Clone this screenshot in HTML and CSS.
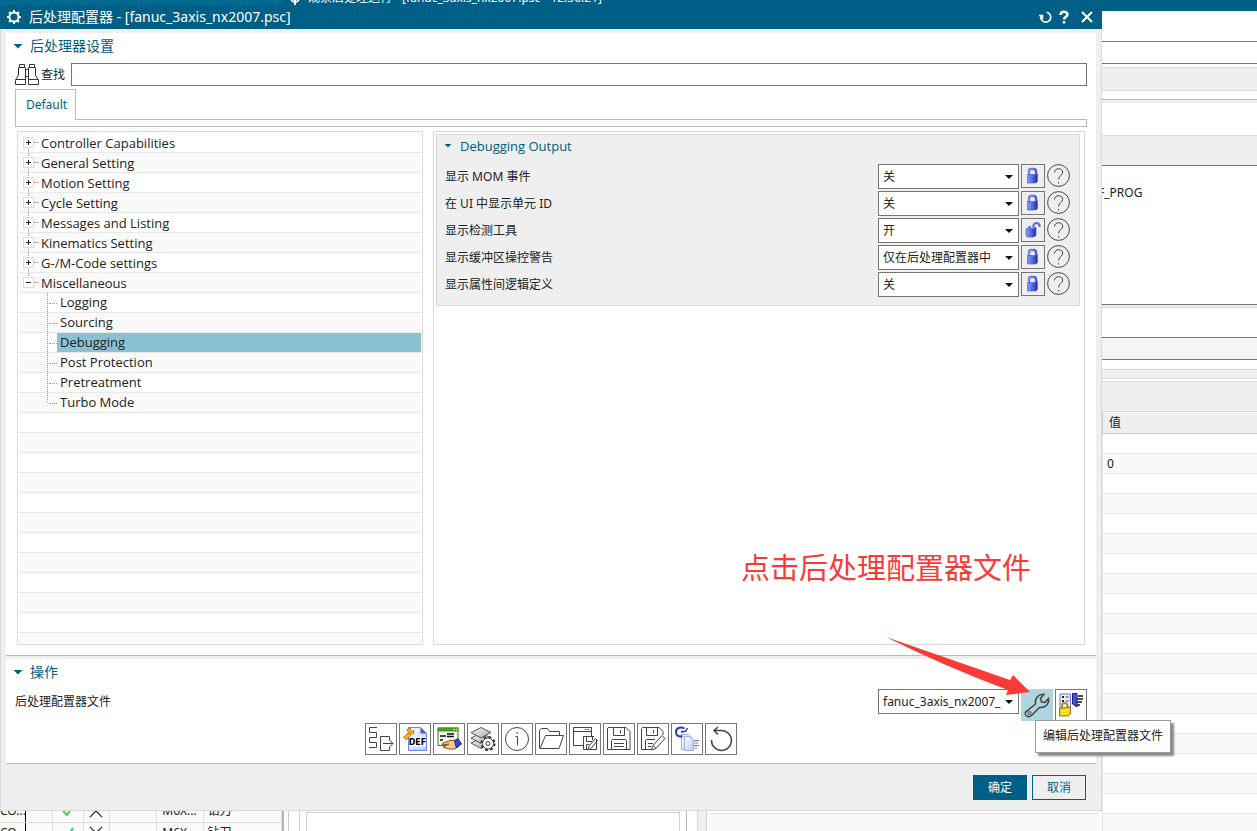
FILE: index.html
```html
<!DOCTYPE html>
<html lang="zh-CN">
<head>
<meta charset="utf-8">
<title>后处理配置器</title>
<link rel="stylesheet" href="styles.css">
</head>
<body>
<svg class="defs" aria-hidden="true">
  <defs>
    <linearGradient id="blue" x1="0" x2="1" y1="0" y2="0">
      <stop offset="0" stop-color="#8d9cf4"/><stop offset=".5" stop-color="#5468e0"/><stop offset="1" stop-color="#1c2f9c"/>
    </linearGradient>
    <linearGradient id="paper" x1="0" x2="1" y1="0" y2="1">
      <stop offset="0" stop-color="#ffffff"/><stop offset="1" stop-color="#b9c8ff"/>
    </linearGradient>
    <linearGradient id="sheet" x1="0" x2="1" y1="0" y2="1">
      <stop offset="0" stop-color="#ffffff"/><stop offset="1" stop-color="#a0a0a0"/>
    </linearGradient>
  </defs>
  <symbol id="lock" viewBox="0 0 22 22">
    <path d="M7 10V6.500Q7 4 9.500 4H11.500Q14 4 14 6.500V10" fill="none" stroke="#4c60d4" stroke-width="2.400"/>
    <path d="M6.800 9V6.500Q7 4.200 9.500 4.200H11.500" fill="none" stroke="#a9b4f8" stroke-width="1"/>
    <path d="M5.500 9.500H14L15.500 8.500V16.500L14 18H5.500Z" fill="url(#blue)" stroke="#4a5fd6" stroke-width=".7"/>
  </symbol>
  <symbol id="unlock" viewBox="0 0 22 22">
    <path d="M11.500 9V6.500Q12 4 14.500 4T17.500 6.500V8" fill="none" stroke="#5a6fe0" stroke-width="2.200"/>
    <path d="M4 9.500H12L14 8V16.500L12 18H5L4 16Z" fill="url(#blue)" stroke="#4a5fd6" stroke-width=".7"/>
    <path d="M6 8H9" stroke="#6a7ce8" stroke-width="2"/>
  </symbol>
  <symbol id="help" viewBox="0 0 23 23">
    <circle cx="11.500" cy="11.500" r="10.900"/>
    <path d="M7.500 8.500C7.500 3.500 15.700 3.500 15.700 8.200C15.700 11.500 11.600 11.500 11.600 15.500M11.600 18V19.500"/>
  </symbol>
</svg>

<div class="app">
  <header class="app-bar">
    <div class="app-tab"></div>
    <div class="app-title"><svg class="app-gear" viewBox="0 0 14 14"><circle cx="7" cy="7" r="4"/><path d="M7 0V14M0 7H14"/></svg><span>观察后处理运行 - [fanuc_3axis_nx2007.psc - 12:56:21]</span></div>
  </header>
  <div class="workspace">
    <div class="lower">
      <div class="ops">
        <table class="ops-table">
          <tr><td class="c-name">CO...</td><td class="c-a"></td><td class="c-tick"><svg viewBox="0 0 14 12"><path class="tick" d="M2 6L6 10L12 1"/></svg></td><td class="c-x"><svg viewBox="0 0 16 16"><path class="cross" d="M1 1L8 8L15 1M1 15L8 8L15 15"/></svg></td><td class="c-b"></td><td class="c-tool">M6X...</td><td class="c-type">钻刀</td></tr>
          <tr><td class="c-name">CO...</td><td class="c-a"></td><td class="c-tick"><svg viewBox="0 0 14 12"><path class="tick" d="M2 6L6 10L12 1"/></svg></td><td class="c-x"><svg viewBox="0 0 16 16"><path class="cross" d="M1 1L8 8L15 1M1 15L8 8L15 15"/></svg></td><td class="c-b"></td><td class="c-tool">M6X...</td><td class="c-type">钻刀</td></tr>
        </table>
      </div>
      <div class="lower-mid"><div class="lower-inner"><div class="lower-box"></div></div></div>
      <div class="lower-split"></div>
      <div class="lower-list"></div>
    </div>
    <aside class="side">
      <div class="side-field"></div>
      <div class="side-strip"></div>
      <div class="side-gap"></div>
      <div class="side-bar"></div>
      <div class="side-text">F_PROG</div>
      <div class="side-blank"></div>
      <div class="side-field shaded"></div>
      <div class="side-thin"></div>
      <div class="side-bar tall"></div>
      <div class="side-head">值</div>
      <div class="side-rows"><div></div><div>0</div></div>
    </aside>
  </div>
</div>

<main class="dialog">
  <header class="title-bar">
    <svg class="gear" viewBox="0 0 16 16"><circle cx="8" cy="8" r="4.600"/><path d="M8 1V3.500M8 12.500V15M1 8H3.500M12.500 8H15M3 3L4.800 4.800M11.200 11.200L13 13M3 13L4.800 11.200M11.200 4.800L13 3"/></svg>
    <h1>后处理配置器 - [fanuc_3axis_nx2007.psc]</h1>
    <button class="win" aria-label="重置"><svg viewBox="0 0 14 14"><path d="M8.500 2.200A5 5 0 1 1 3 5.500M1 5.500H4.500V9" fill="none" stroke="#fff" stroke-width="1.600"/></svg></button>
    <button class="win" aria-label="帮助"><svg viewBox="0 0 14 14"><path d="M3.500 5C3.500 .8 10.500 .8 10.500 4.500C10.500 7 7 6.800 7 9.500M7 11V13.500" fill="none" stroke="#fff" stroke-width="2.500"/></svg></button>
    <button class="win last" aria-label="关闭"><svg viewBox="0 0 14 14"><path d="M2 2L12 12M12 2L2 12" fill="none" stroke="#fff" stroke-width="2"/></svg></button>
  </header>

  <section class="panel settings">
    <h2>后处理器设置</h2>
    <div class="search">
      <svg class="binoc" viewBox="0 0 24 23"><path d="M.5 21.500V17.500L3.500 12V4.500H4.500V1.500H9.500V4.500H10.500V21.500ZM23.500 21.500V17.500L20.500 12V4.500H19.500V1.500H14.500V4.500H13.500V21.500ZM.5 16.500H10.500M13.500 16.500H23.500M4.500 4.500H9.500M14.500 4.500H19.500M10.500 6.500H13.500M10.500 13.500H13.500"/></svg>
      <label for="find">查找</label>
      <input id="find" type="text">
    </div>
    <div class="tabs">
      <button class="tab">Default</button>
      <div class="tab-line"></div>
    </div>
    <div class="split">
      <ul class="tree">
        <li><i class="box plus"></i>Controller Capabilities</li>
        <li><i class="box plus"></i>General Setting</li>
        <li><i class="box plus"></i>Motion Setting</li>
        <li><i class="box plus"></i>Cycle Setting</li>
        <li><i class="box plus"></i>Messages and Listing</li>
        <li><i class="box plus"></i>Kinematics Setting</li>
        <li><i class="box plus"></i>G-/M-Code settings</li>
        <li class="open"><i class="box"></i>Miscellaneous</li>
        <li class="leaf"><span>Logging</span></li>
        <li class="leaf"><span>Sourcing</span></li>
        <li class="leaf selected"><span>Debugging</span></li>
        <li class="leaf"><span>Post Protection</span></li>
        <li class="leaf"><span>Pretreatment</span></li>
        <li class="leaf end"><span>Turbo Mode</span></li>
      </ul>
      <div class="detail">
        <div class="group">
          <h3>Debugging Output</h3>
          <div class="prop"><label for="p1">显示 MOM 事件</label><div class="combo"><select id="p1"><option>关</option></select></div><button class="lock" aria-label="锁定"><svg><use href="#lock"/></svg></button><button class="help" aria-label="帮助"><svg><use href="#help"/></svg></button></div>
          <div class="prop"><label for="p2">在 UI 中显示单元 ID</label><div class="combo"><select id="p2"><option>关</option></select></div><button class="lock" aria-label="锁定"><svg><use href="#lock"/></svg></button><button class="help" aria-label="帮助"><svg><use href="#help"/></svg></button></div>
          <div class="prop"><label for="p3">显示检测工具</label><div class="combo"><select id="p3"><option>开</option></select></div><button class="lock" aria-label="解锁"><svg><use href="#unlock"/></svg></button><button class="help" aria-label="帮助"><svg><use href="#help"/></svg></button></div>
          <div class="prop"><label for="p4">显示缓冲区操控警告</label><div class="combo"><select id="p4"><option>仅在后处理配置器中</option></select></div><button class="lock" aria-label="锁定"><svg><use href="#lock"/></svg></button><button class="help" aria-label="帮助"><svg><use href="#help"/></svg></button></div>
          <div class="prop"><label for="p5">显示属性间逻辑定义</label><div class="combo"><select id="p5"><option>关</option></select></div><button class="lock" aria-label="锁定"><svg><use href="#lock"/></svg></button><button class="help" aria-label="帮助"><svg><use href="#help"/></svg></button></div>
        </div>
      </div>
    </div>
  </section>

  <section class="panel actions">
    <h2>操作</h2>
    <div class="file-row">
      <label for="file">后处理配置器文件</label>
      <div class="combo"><select id="file"><option>fanuc_3axis_nx2007_</option></select></div>
      <div class="edit-wrap">
        <button class="icon edit" aria-label="编辑"><svg viewBox="1 1 30 30"><path class="ln heavy" d="M4.800 22.800L14.500 15C13.500 9 17.500 5 23 5.200L19.500 9.500L20.500 13L24 13.500L27.500 9.500C28.500 15 24.500 19 18.500 18.500L10.500 26.500C7.500 29.500 2.500 26 4.800 22.800Z"/><circle class="ln" cx="8.500" cy="24" r="1.500"/></svg></button>
        <div class="tooltip">编辑后处理配置器文件</div>
      </div>
      <button class="icon" aria-label="保护"><svg viewBox="1 1 30 30"><path d="M5 5H15.500V22H5Z" fill="#eef0ff" stroke="#6d73cf"/><path d="M7 8H9M7 12H9" stroke="#222" stroke-width="2"/><path d="M10.500 8H14M10.500 12H14" stroke="#3949bb"/><path d="M17.500 4.500H22V18L17.500 15Z" fill="#4156da" stroke="#17206c"/><path d="M23 7H28M22 10H28M22 13H27M22 16H25" stroke="#111" stroke-width="1.500"/><path d="M7 19V16.500Q7 14 9.500 14T12.500 16.500V18" fill="none" stroke="#b89200" stroke-width="2"/><path d="M4.500 19.500L15.500 18V25L13 27H4.500Z" fill="#f3d21f" stroke="#957700"/><path d="M6 22H13M6 24.500H13" stroke="#fff27e"/></svg></button>
    </div>
    <div class="tools">
      <button class="icon" aria-label="导出"><svg viewBox="1 1 30 30"><path class="ln" d="M12 4.500H4.500V9.500H11.500V14.500H4.500V19.500H11.500V24.500H4M24.500 17V13.500H15.500V27.500H24.500V24M18 20.500H28M24.500 17L28 20.500L24.500 24"/></svg></button>
      <button class="icon" aria-label="定义"><svg viewBox="1 1 30 30"><path d="M9.500 4.500H21.500L27.500 10.500V27.500H9.500Z" fill="url(#paper)" stroke="#6d83e6"/><path d="M21.500 4.500V10.500H27.500Z" fill="#3b5be0"/><path d="M5.500 16L11 10.500" stroke="#b56b00" stroke-width="4"/><path d="M5.500 16L11 10.500" stroke="#ffb62c" stroke-width="2.500"/><path d="M8 6.500L10 11L14.500 11L15 7L12.500 8.500L11 7.500L12 4.500Z" fill="#ffb62c" stroke="#b56b00" stroke-width=".8"/><rect x="10.500" y="14" width="16" height="9.500" fill="#fff"/><text x="18.500" y="22" text-anchor="middle" class="def">DEF</text></svg></button>
      <button class="icon" aria-label="检查"><svg viewBox="1 1 30 30"><path d="M5 5H25V22.500H5Z" fill="#f4f8ef" stroke="#3e7d20"/><path d="M4.500 4.500H25.500V8.500H4.500Z" fill="#4d9a27"/><path d="M20 6.500H22M23 6.500H24.500" stroke="#fff"/><path d="M7 13H13M14 11H21M14 13.500H21M7 17H10" stroke="#111" stroke-width="1.500"/><path d="M10 20L17 17.500L23 17L25.500 22L22 26H15L12 24.500L10 24L16 21L9 22Z" fill="#f8c983" stroke="#80531b"/><path d="M21.500 18L25 15.500L28.500 21L23.500 25Z" fill="#314fc8" stroke="#142a83"/></svg></button>
      <button class="icon" aria-label="图层设置"><svg viewBox="1 1 30 30"><path d="M4 20L14 25.500L24 20L14 15Z" fill="url(#sheet)" stroke="#555"/><path d="M4 15L14 20.500L24 15L14 10Z" fill="url(#sheet)" stroke="#555"/><path d="M4 9.500L14 15L24 9.500L14 4.500Z" fill="url(#sheet)" stroke="#555"/><circle cx="21" cy="20.500" r="6.500" fill="#fff" stroke="#333" stroke-width="2.200" stroke-dasharray="2.600 2.500"/><circle cx="21" cy="20.500" r="5.500" fill="#fff" stroke="#333"/><circle cx="21" cy="20.500" r="2" fill="#fff" stroke="#333"/></svg></button>
      <button class="icon" aria-label="信息"><svg viewBox="1 1 30 30"><circle class="ln" cx="16" cy="16" r="11.500"/><path class="ln" d="M14.500 13.500H16.500V22.500M16.200 9V11"/></svg></button>
      <button class="icon" aria-label="打开"><svg viewBox="1 1 30 30"><path class="ln" d="M5 25.500L4.500 24.500V7.500L6.500 5.500H12.500L14.500 8.500H24.500V12.500M5 25.500L10.500 12.500H28.500L24 25.500Z"/></svg></button>
      <button class="icon" aria-label="窗口另存"><svg viewBox="1 1 30 30"><path class="ln" d="M14 22.500H4.500V4.500H22.500V13M4.500 8.500H22.500M16 6.500H17.500M18.500 6.500H20M27.500 17V26.500H14.500V13.500H25M17.500 13.500V18.500H23M17.500 26.500V21.500H20M23.500 14V17"/><path class="ln" d="M19 27L20 23L26.500 15.500L28.500 17.500L22.500 25Z"/></svg></button>
      <button class="icon" aria-label="保存"><svg viewBox="1 1 30 30"><path class="ln" d="M4.500 5.500L5.500 4.500H23L27 8.500V26.500H4.500ZM10.500 4.500V12.500H21.500V4.500M17.500 7V10M8.500 26.500V17.500L9.500 16.500H22.500L23.500 17.500V26.500M11 20.500H21M11 23.500H21"/></svg></button>
      <button class="icon" aria-label="另存为"><svg viewBox="1 1 30 30"><path class="ln" d="M15 26.500H4.500V5.500L5.500 4.500H22L26 8.500V12M9.500 4.500V12.500H20.500V4.500M16.500 7V10M8.500 26.500V17.500L9.500 16.500H18M11 20.500H16M11 23.500H14M14.500 27L16 22.500L25 12.500L28 15.500L19 25.500ZM16 22.500L19 25.500"/></svg></button>
      <button class="icon" aria-label="重新生成"><svg viewBox="1 1 30 30"><path d="M10.500 11.500H17.500L20.500 14.500V26.500H10.500Z" fill="url(#paper)" stroke="#a3b0e8"/><path d="M13.500 13.500H18.500L22.500 17V27.500H13.500Z" fill="url(#paper)" stroke="#a3b0e8"/><path d="M22.500 17.500H28M23.500 20H27M22.500 22.500H28M23.500 25H26" stroke="#5d76d0"/><path d="M13.500 5.500C9 3 5 5.500 5 9C5 12.500 8 14.500 11.500 13" fill="none" stroke="#2f429c" stroke-width="2"/><path d="M11 10V8.500H14.500L16.500 5" fill="none" stroke="#2f429c" stroke-width="1.500"/></svg></button>
      <button class="icon" aria-label="撤消"><svg viewBox="1 1 30 30"><path class="ln heavy" d="M6.500 17A10 10 0 1 0 16 7.500H9M13 4L9 7.500L13 11.500"/></svg></button>
    </div>
  </section>

  <footer class="foot">
    <button class="btn primary">确定</button>
    <button class="btn">取消</button>
  </footer>

  <div class="note">点击后处理配置器文件</div>
  <svg class="arrow" viewBox="0 0 144 60"><path d="M0 0L124 43L127 38L144 55L120 58L122 53Q60 30 0 0Z"/></svg>
</main>
</body>
</html>
```

FILE: styles.css
```css
* { box-sizing: border-box; }

body {
  margin: 0;
  position: relative;
  height: 100vh;
  overflow: hidden;
  background: #fff;
  color: #222;
  font: 12px/20px "Noto Sans", "Noto Sans CJK SC", sans-serif;
}

button, input, select { font: inherit; color: inherit; margin: 0; padding: 0; }
h1, h2, h3, ul { margin: 0; padding: 0; font-weight: normal; }
.defs { position: absolute; width: 0; height: 0; }

/* main application behind the dialog */
.app { display: flex; flex-direction: column; height: 100%; }
.app-bar { display: flex; flex: none; height: 11px; background: #005f87; color: #fff; }
.app-tab { width: 282px; height: 5px; background: #006a8e; }
.app-title { display: flex; align-items: center; gap: 6px; height: 20px; margin: -12px 0 0 6px; }
.app-gear { width: 14px; height: 14px; fill: none; stroke: #fff; stroke-width: 2; }
.workspace { flex: 1; min-height: 0; display: grid; grid-template-columns: 1fr 159px; }
.lower { align-self: end; display: flex; height: 30px; overflow: hidden; }
.ops { flex: none; width: 284px; border-right: 2px solid #b4b4b4; overflow: hidden; }
.ops-table { border-collapse: collapse; table-layout: fixed; width: 282px; background: #fafafa; }
.ops-table td { height: 21px; padding: 0; border-right: 1px solid #dedede; border-bottom: 1px solid #dedede; line-height: 20px; text-align: center; white-space: nowrap; overflow: hidden; }
.ops-table svg { display: block; margin: auto; width: 14px; height: 14px; }
.ops-table .c-name { width: 25px; padding-right: 4px; border-right: 1px solid #000; direction: rtl; unicode-bidi: plaintext; text-align: right; }
.ops-table .c-a { width: 27px; }
.ops-table .c-tick { width: 31px; }
.ops-table .c-x { width: 26px; }
.ops-table .c-b { width: 47px; }
.ops-table .c-tool { width: 47px; }
.ops-table .c-type { text-align: left; padding-left: 4px; }
.tick { fill: none; stroke: #3bd44b; stroke-width: 2; }
.cross { fill: none; stroke: #333; stroke-width: 1.5; }
.lower-mid { flex: 394; margin-left: 4px; padding-left: 10px; border-left: 1px solid #ccc; border-right: 1px solid #bbb; }
.lower-inner { height: 100%; padding: 11px 6px 0; border-left: 1px solid #ccc; }
.lower-box { height: 100%; border: 1px solid #d0d0d0; border-bottom: 0; }
.lower-split { flex: none; width: 10px; margin: 0 2px 0 10px; border-left: 1px solid #d9d9d9; border-right: 1px solid #d0d0d0; background: #efefef; }
.lower-list { flex: 396; margin-top: 12px; border-top: 1px solid #e5e5e5; background: #f9f9f9; }

.side { display: flex; flex-direction: column; min-height: 0; overflow: hidden; }
.side > div { flex: none; }
.side-field { height: 23px; margin-top: 30px; border: solid #767676; border-width: 1px 0; }
.side-field.shaded { margin-top: 29px; background: #f5f5f5; }
.side-strip { height: 24px; margin-top: 3px; background: #efefef; border: solid #d9d9d9; border-width: 1px 0; }
.side-gap { height: 4px; margin-top: 8px; background: #efefef; border-top: 1px solid #bbb; }
.side-bar { height: 30px; margin-top: 32px; background: #efefef; border-top: 1px solid #d9d9d9; }
.side-bar.tall { height: 31px; margin-top: 2px; border-bottom: 1px solid #d9d9d9; }
.side-text { height: 140px; padding-top: 17px; border: solid #767676; border-width: 1px 0; }
.side-blank { height: 3px; background: #efefef; border-bottom: 1px solid #d9d9d9; }
.side-thin { height: 10px; margin-top: 9px; background: #efefef; border: solid #d9d9d9; border-width: 1px 0; }
.side-head { height: 21px; margin-top: 1px; margin-left: 4px; padding-left: 6px; background: #efefef; border: solid #ccc; border-width: 0 0 1px 1px; line-height: 20px; }
.side > .side-rows { flex: 1 0 0; margin-left: 4px; border-left: 1px solid #e5e5e5; background: repeating-linear-gradient(#fff 0 19px, #e5e5e5 19px 20px, #f9f9f9 20px 39px, #e5e5e5 39px 40px); }
.side-rows div { height: 20px; padding-left: 4px; line-height: 19px; }

/* dialog */
.dialog {
  position: absolute;
  top: 5px;
  bottom: 20px;
  left: 0;
  width: calc(100% - 155px);
  display: flex;
  flex-direction: column;
  background: #efefef;
  border: solid #d9d9d9;
  border-width: 0 1px 1px;
}
.title-bar { display: flex; align-items: center; height: 24px; margin: 0 -1px 4px; padding: 0 8px 0 6px; background: #005f87; color: #fff; }
.title-bar h1 { flex: 1; font-size: 14px; line-height: 24px; }
.gear { width: 16px; height: 16px; margin-right: 7px; fill: none; stroke: #fff; stroke-width: 2; }
.win { width: 14px; height: 14px; margin-left: 5px; border: 0; background: none; }
.win.last { margin-left: 9px; }
.win svg { display: block; width: 14px; height: 14px; }

.panel { margin: 0 5px; background: #fff; border-bottom: 1px solid #bbb; }
.panel h2, .group h3 { display: flex; align-items: center; color: #00607f; }
.panel h2 { padding-left: 7px; gap: 7px; height: 26px; font-size: 14px; }
.panel h2::before, .group h3::before { content: ""; width: 10px; height: 5px; background: #00607f; clip-path: polygon(0 0, 100% 0, 50% 100%); }
.settings { flex: 1; min-height: 0; display: flex; flex-direction: column; padding: 0 9px 10px; }
.settings h2 { margin-left: -9px; }
.settings h2, .search, .tabs { flex: none; }
.search { display: flex; align-items: center; margin-top: 4px; height: 23px; }
.binoc { width: 24px; height: 23px; margin-right: 2px; fill: none; stroke: #333; }
.search input { flex: 1; height: 23px; margin-left: 6px; border: 1px solid #767676; background: #fff; }
.tabs { display: flex; height: 38px; margin-top: 3px; border-left: 1px solid #bbb; border-bottom: 1px solid #bbb; }
.tab { width: 60px; height: 31px; padding-left: 2px; border: solid #bbb; border-width: 1px 1px 0 0; background: #fff; color: #00607f; }
.tab-line { flex: 1; align-self: end; height: 7px; border: solid #bbb; border-width: 1px 1px 0 0; }
.split { flex: 1; min-height: 0; display: grid; grid-template-columns: 406fr 652fr; gap: 10px; margin: 4px 2px 0; }

.tree {
  list-style: none;
  padding: 1px;
  border: 1px solid #d9d9d9;
  overflow: hidden;
  font-family: "Open Sans", "Noto Sans CJK SC", sans-serif;
  font-size: 13px;
  background: repeating-linear-gradient(#fff 0 19px, #e8e8e8 19px 20px, #f9f9f9 20px 39px, #e8e8e8 39px 40px) content-box;
}
.tree li { display: flex; align-items: center; height: 20px; padding-left: 5px; line-height: 18px; padding-bottom: 1px; background: repeating-linear-gradient(#999 0 1px, transparent 1px 2px) 9px 0 / 1px 20px no-repeat; }
.tree li:first-child { background-position: 9px 10px; }
.tree li.open { background-size: 1px 10px; }
.box { position: relative; flex: none; width: 9px; height: 9px; margin-right: 8px; background: linear-gradient(#222, #222) center / 5px 1px no-repeat #fff; box-shadow: 0 0 0 1px #ddd; }
.box.plus { background: linear-gradient(#222, #222) center / 5px 1px no-repeat, linear-gradient(#222, #222) center / 1px 5px no-repeat #fff; }
.box::after { content: ""; position: absolute; left: 10px; top: 4px; width: 4px; border-top: 1px dotted #999; }
.tree li.leaf { padding-left: 38px; padding-bottom: 0; background: repeating-linear-gradient(#999 0 1px, transparent 1px 2px) 28px 0 / 1px 20px no-repeat; }
.tree li.leaf.end { background-size: 1px 10px; }
.leaf::before { content: ""; width: 8px; margin-left: -8px; border-top: 1px dotted #999; }
.leaf span { flex: 1; height: 20px; padding-left: 3px; border-bottom: 1px solid transparent; background-clip: padding-box; }
.leaf.selected span { background-color: #8bc1d1; }

.detail { min-width: 0; padding: 2px 4px 2px 2px; border: 1px solid #d9d9d9; }
.group { padding: 0 9px 8px 8px; border: 1px solid #d9d9d9; background: #efefef; }
.group h3 { height: 21px; margin-bottom: 8px; gap: 8px; font-family: "Open Sans", "Noto Sans CJK SC", sans-serif; font-size: 13px; }
.group h3::before { width: 8px; height: 4px; margin-left: -1px; }
.prop { display: flex; align-items: flex-start; height: 25px; margin-bottom: 2px; }
.prop:last-child { margin-bottom: 0; }
.prop label, .file-row label { flex: 1; line-height: 25px; }
.combo { position: relative; width: 141px; height: 25px; }
.combo select { width: 100%; height: 100%; padding-left: 4px; border: 1px solid #767676; border-radius: 0; background: #fff; appearance: none; }
.combo::after { content: ""; position: absolute; right: 6px; top: 11px; width: 8px; height: 4px; background: #111; clip-path: polygon(0 0, 100% 0, 50% 100%); pointer-events: none; }
.lock { width: 24px; height: 24px; margin-left: 2px; border: 1px solid #767676; background: #efefef; }
.lock svg { display: block; width: 22px; height: 22px; }
.help { width: 23px; height: 23px; margin-left: 2px; border: 0; background: none; }
.help svg { display: block; width: 23px; height: 23px; fill: none; stroke: #444; }

.actions { margin-top: 3px; padding-bottom: 8px; }
.file-row { display: flex; align-items: flex-start; margin: 4px 9px 2px; }
.icon { width: 32px; height: 32px; border: 1px solid #767676; background: #fff; }
.icon svg { display: block; width: 30px; height: 30px; fill: none; }
.ln { fill: none; stroke: #444; stroke-width: 1; }
.heavy { stroke-width: 1.5; }
.def { font: bold 8px "DejaVu Sans", sans-serif; fill: #000; }
.edit-wrap { position: relative; margin: 0 2px; }
.edit-wrap .edit { display: block; border-color: #aed6e0; background: #aed6e0; }
.tooltip { position: absolute; z-index: 2; left: 14px; top: 31px; padding: 5px 7px 6px; border: 1px solid #999; background: #fff; box-shadow: 3px 3px 2px #888; white-space: nowrap; }
.tools { display: flex; justify-content: center; gap: 2px; }

.foot { display: flex; justify-content: flex-end; gap: 5px; padding: 11px 15px 10px; }
.btn { width: 54px; height: 25px; border: 1px solid #005f87; border-radius: 0; background: #efefef; color: #005f87; }
.btn.primary { background: #005f87; color: #fff; }

.note { position: absolute; right: 70px; top: 541px; color: #f93b38; font-size: 29px; line-height: 44px; }
.arrow { position: absolute; right: 71px; top: 632px; width: 144px; height: 60px; fill: #f93b38; }
```
